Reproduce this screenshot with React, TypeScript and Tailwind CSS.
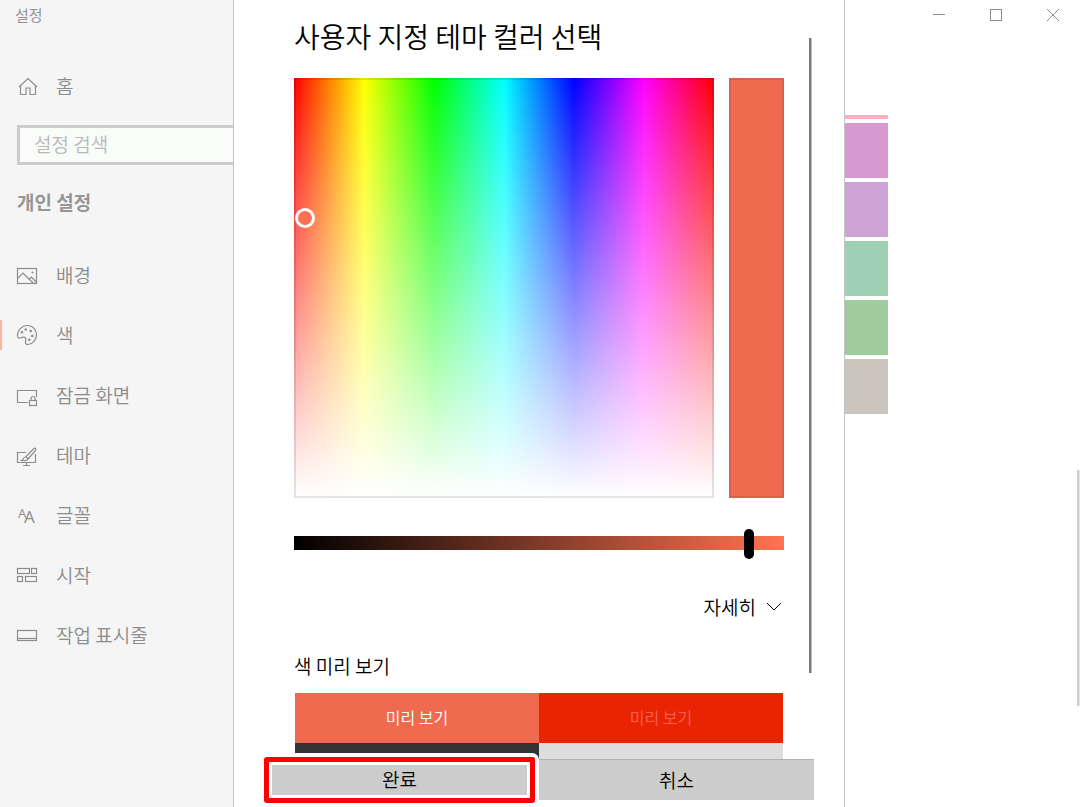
import { useState } from "react";
import type { ReactNode } from "react";

const navItems: { label: string; icon: ReactNode }[] = [
  {
    label: "배경",
    icon: (
      <>
        <rect x="1.5" y="4.5" width="19" height="15" />
        <path d="M1.5 14.5 7 9l10.5 10.5M12.5 15.5l3-2.5 5 5.5" />
        <circle cx="16.5" cy="8.5" r="0.5" />
      </>
    ),
  },
  {
    label: "색",
    icon: (
      <>
        <path d="M1.5 11.5C1.5 5.8 6 1.5 11.5 1.5s9 4.3 9 9.5-4.5 9.5-8.5 9.5c-2 0-3-1.5-2.5-3s1-2.5 0-3.5c-1.5-1.5-3-1-4.5-.2-2 1-3.5 0-3.5-2.3z" />
        <circle cx="6" cy="8.3" r="0.7" />
        <circle cx="9.7" cy="5.5" r="0.7" />
        <circle cx="14.7" cy="7" r="0.7" />
        <circle cx="16.3" cy="12" r="0.7" />
        <circle cx="13.3" cy="15.7" r="0.7" />
      </>
    ),
  },
  {
    label: "잠금 화면",
    icon: (
      <>
        <path d="M12 18.5H1.5v-12h19V13" />
        <rect x="13.5" y="16.5" width="7" height="5" />
        <path d="M15 16.5v-2a2 2 0 0 1 4 0v2" />
      </>
    ),
  },
  {
    label: "테마",
    icon: (
      <>
        <path d="M10 8.5H1.5v10h18V10M10.5 18.5v3M7 21.5h7" />
        <path d="M18 4.5 10 12.5l2 2.5 7.5-8.5c1.2-1.5-.3-3-1.5-2z" />
        <path d="M9.5 13c-2.5 0-1.5 2.5-4 3.5 2.5.5 5.5.5 6.5-1.5" />
      </>
    ),
  },
  {
    label: "글꼴",
    icon: (
      <g
        className="font-['Open_Sans'] font-normal"
        fill="currentColor"
        stroke="none"
      >
        <text x="2" y="14" fontSize="13">
          A
        </text>
        <text x="8" y="19" fontSize="17">
          A
        </text>
      </g>
    ),
  },
  {
    label: "시작",
    icon: (
      <>
        <rect x="1.5" y="4.5" width="12" height="5" />
        <rect x="15.5" y="4.5" width="5" height="5" />
        <rect x="1.5" y="12.5" width="5" height="5" />
        <rect x="9.5" y="12.5" width="11" height="5" />
      </>
    ),
  },
  {
    label: "작업 표시줄",
    icon: (
      <>
        <rect x="1.5" y="6.5" width="19" height="10" />
        <path d="M1.5 14.5h19" />
      </>
    ),
  },
];

export default function App() {
  return (
    <div className="flex h-screen overflow-hidden bg-white font-['Noto_Sans_CJK_KR',sans-serif] text-[19px] font-[350]">
      <Sidebar />
      <ColorDialog />
      <Background />
    </div>
  );
}

function Icon({ children }: { children: ReactNode }) {
  return (
    <svg
      viewBox="0 0 22 22"
      className="size-[22px] shrink-0 overflow-visible"
      fill="none"
      stroke="currentColor"
      strokeWidth="1.2"
      aria-hidden="true"
    >
      {children}
    </svg>
  );
}

function Sidebar() {
  return (
    <aside className="w-[233px] shrink-0 overflow-hidden bg-[#f5f5f5] text-[#8c8c8c]">
      <p className="h-[30px] pl-[15px] text-[15px] leading-[30px]">설정</p>

      <a href="#home" className="mt-9 flex h-10 items-center gap-[18px] pl-4">
        <Icon>
          <path d="m3 12 9-8.5 9 8.5M4.5 10.5v9H10V13h4v6.5h5.5v-9" />
        </Icon>
        홈
      </a>

      <input
        type="search"
        aria-label="설정 검색"
        placeholder="설정 검색"
        className="mt-[19px] ml-[17px] block h-10 w-[300px] border-[3px] border-[#ccc] bg-[#fafcfa] pb-1 pl-3.5 outline-none placeholder:text-[#b8b8b8]"
      />

      <h2 className="mt-[25px] h-6 pl-[17px] text-[19px] leading-6 font-bold text-[#969696]">
        개인 설정
      </h2>

      <nav className="mt-[31px]">
        {navItems.map((item) => (
          <a
            key={item.label}
            href={`#${item.label}`}
            className="flex h-[60px] items-center"
          >
            <span
              className={
                item.label === "색"
                  ? "mr-3.5 h-[30px] w-0.5 bg-[#ffb4a2]"
                  : "mr-3.5 h-[30px] w-0.5"
              }
            />
            <Icon>{item.icon}</Icon>
            <span className="pl-[18px]">{item.label}</span>
          </a>
        ))}
      </nav>
    </aside>
  );
}

// Custom accent color dialog
function ColorDialog() {
  const [value, setValue] = useState(239);

  return (
    <section
      role="dialog"
      aria-labelledby="dialog-title"
      className="flex w-[612px] shrink-0 flex-col border-x border-[#c4c4c4] bg-white px-[30px] pb-[7px] text-black"
    >
      <div className="flex min-h-0 flex-1 overflow-hidden pl-[30px]">
        <div className="w-[490px] shrink-0">
          <h1
            id="dialog-title"
            className="mt-4 mb-[22px] text-[28px] leading-10 whitespace-nowrap"
          >
            사용자 지정 테마 컬러 선택
          </h1>

          <div className="flex h-[420px] gap-[15px]">
            <div className="relative flex-1 border-2 border-black/10 bg-[linear-gradient(to_bottom,transparent,#fff),linear-gradient(to_right,#f00,#ff0,#0f0,#0ff,#00f,#f0f,#f00)] bg-origin-border">
              <span className="absolute top-[128px] -left-px size-5 rounded-full border-[3px] border-white bg-[#ff7050]" />
            </div>
            <div className="w-[55px] border-2 border-[#d8614b] bg-[#f06a50]" />
          </div>

          <input
            type="range"
            aria-label="명도"
            min={0}
            max={255}
            value={value}
            onChange={(e) => setValue(Number(e.target.value))}
            className="mt-[30px] block h-[30px] w-full appearance-none bg-transparent [&::-webkit-slider-runnable-track]:h-3.5 [&::-webkit-slider-runnable-track]:bg-[linear-gradient(to_right,#000,#ff7450)] [&::-webkit-slider-thumb]:-mt-[7px] [&::-webkit-slider-thumb]:h-[30px] [&::-webkit-slider-thumb]:w-2.5 [&::-webkit-slider-thumb]:appearance-none [&::-webkit-slider-thumb]:rounded-full [&::-webkit-slider-thumb]:bg-black"
          />

          <button
            type="button"
            className="mt-[37px] ml-auto flex h-6 items-center gap-2.5 pr-0.5 leading-6"
          >
            자세히
            <svg
              viewBox="0 0 16 10"
              className="h-2.5 w-4"
              fill="none"
              stroke="currentColor"
              aria-hidden="true"
            >
              <path d="m1 1 7 7 7-7" />
            </svg>
          </button>

          <h2 className="mt-[35px] h-6 leading-6">색 미리 보기</h2>

          <div className="mx-px mt-[15px] grid grid-cols-2 text-center text-[16px] leading-12">
            <div className="h-[50px] bg-[#f06a50] text-white">미리 보기</div>
            <div className="h-[50px] bg-[#e82402] text-[#ff6258]">
              미리 보기
            </div>
            <div className="h-[50px] bg-[#333]" />
            <div className="h-[50px] bg-[#ddd]" />
          </div>
        </div>

        <div className="mt-[38px] ml-[25px] h-[635px] w-[3px] shrink-0 border-r border-[#c0c0c0] bg-[#7a7a7a]" />
      </div>

      <div className="grid h-[41px] shrink-0 grid-cols-2">
        <button type="button" className="relative bg-[#ccc] pr-1">
          완료
          <span className="absolute -top-0.5 right-1 -bottom-[3px] left-0 rounded-[3px] border-[5px] border-[#f00] shadow-[0_0_0_4px_#fff,inset_0_0_0_3px_#fff]" />
        </button>
        <button type="button" className="border-t border-[#b0b0b0] bg-[#ccc]">
          취소
        </button>
      </div>
    </section>
  );
}

// Dimmed settings page behind the dialog
function Background() {
  return (
    <main className="relative min-w-0 flex-1">
      <div className="flex h-[30px] items-center justify-end gap-[45px] pr-[21px] text-[#8c8c8c]">
        <button type="button" aria-label="최소화">
          <svg viewBox="0 0 12 12" className="size-3" stroke="currentColor">
            <path d="M0 5.5h12" />
          </svg>
        </button>
        <button type="button" aria-label="최대화">
          <svg
            viewBox="0 0 12 12"
            className="size-3"
            fill="none"
            stroke="currentColor"
          >
            <rect x="0.5" y="0.5" width="11" height="11" />
          </svg>
        </button>
        <button type="button" aria-label="닫기">
          <svg viewBox="0 0 12 12" className="size-3" stroke="currentColor">
            <path d="m0 0 12 12M12 0 0 12" />
          </svg>
        </button>
      </div>

      <div className="mt-[85px] flex w-[43px] flex-col gap-1">
        <div className="h-1 bg-[#ffb0c0]" />
        <div className="h-[55px] bg-[#d899d0]" />
        <div className="h-[55px] bg-[#cda2d5]" />
        <div className="h-[55px] bg-[#a0d0b4]" />
        <div className="h-[55px] bg-[#a0cb9e]" />
        <div className="h-[55px] bg-[#cac6be]" />
      </div>

      <div className="absolute top-[470px] right-0 h-[236px] w-[3px] border-r border-[#e8e8e8] bg-[#ccc]" />
    </main>
  );
}
